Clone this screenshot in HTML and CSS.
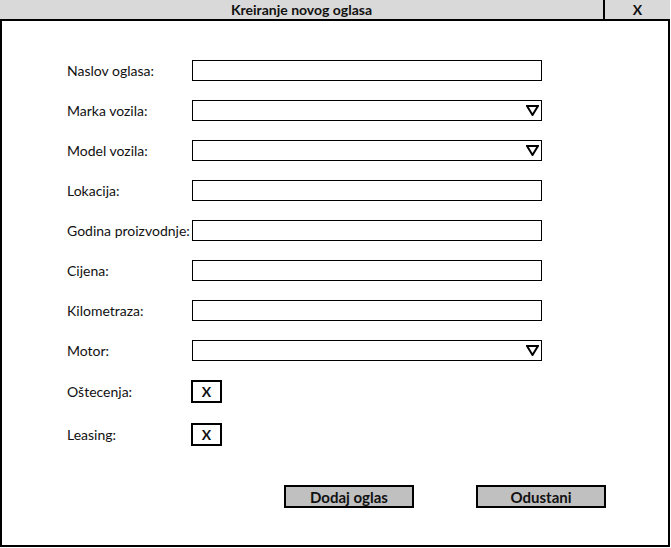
FILE: index.html
```html
<!DOCTYPE html>
<html>
<head>
<meta charset="utf-8">
<link rel="stylesheet" href="styles.css">
</head>
<body>
<div class="window">
  <div class="titlebar">
    <div class="title">Kreiranje novog oglasa</div>
    <div class="close">X</div>
  </div>
  <div class="form">
    <div class="row"><span class="label">Naslov oglasa:</span><span class="input"></span></div>
    <div class="row"><span class="label">Marka vozila:</span><span class="input select"><svg class="arrow" width="13" height="11" viewBox="0 0 13 11"><polygon points="1,1 12,1 6.5,10" fill="none" stroke="#000" stroke-width="2" stroke-linejoin="miter"/></svg></span></div>
    <div class="row"><span class="label">Model vozila:</span><span class="input select"><svg class="arrow" width="13" height="11" viewBox="0 0 13 11"><polygon points="1,1 12,1 6.5,10" fill="none" stroke="#000" stroke-width="2" stroke-linejoin="miter"/></svg></span></div>
    <div class="row"><span class="label">Lokacija:</span><span class="input"></span></div>
    <div class="row"><span class="label">Godina proizvodnje:</span><span class="input"></span></div>
    <div class="row"><span class="label">Cijena:</span><span class="input"></span></div>
    <div class="row"><span class="label">Kilometraza:</span><span class="input"></span></div>
    <div class="row"><span class="label">Motor:</span><span class="input select"><svg class="arrow" width="13" height="11" viewBox="0 0 13 11"><polygon points="1,1 12,1 6.5,10" fill="none" stroke="#000" stroke-width="2" stroke-linejoin="miter"/></svg></span></div>
    <div class="row check-row"><span class="label">Oštecenja:</span><span class="check">X</span></div>
    <div class="row check-row"><span class="label">Leasing:</span><span class="check">X</span></div>
    <div class="buttons">
      <span class="btn">Dodaj oglas</span>
      <span class="btn">Odustani</span>
    </div>
  </div>
</div>
</body>
</html>
```

FILE: styles.css
```css
html, body {
  margin: 0;
  padding: 0;
  background: #fff;
}
body {
  font-family: Lato, "Liberation Sans", Arial, sans-serif;
  font-size: 14px;
  color: #111;
}
.window {
  width: 670px;
  height: 547px;
  box-sizing: border-box;
  border-left: 2px solid #000;
  border-right: 2px solid #000;
  border-bottom: 2px solid #000;
  display: flex;
  flex-direction: column;
}
.titlebar {
  height: 21px;
  box-sizing: border-box;
  background: #d9d9d9;
  border-bottom: 2px solid #000;
  display: flex;
  margin-left: -2px;
  margin-right: -2px;
}
.title {
  width: 605px;
  box-sizing: border-box;
  border-right: 2px solid #000;
  text-align: center;
  font-weight: bold;
  font-size: 14px;
  line-height: 19px;
}
.close {
  flex: 1;
  text-align: center;
  font-weight: bold;
  font-size: 14px;
  line-height: 19px;
}
.form {
  padding: 39px 0 0 65px;
  display: flex;
  flex-direction: column;
}
.row {
  display: flex;
  align-items: center;
  height: 21px;
  margin-bottom: 19px;
}
.label {
  width: 125px;
  white-space: nowrap;
}
.input {
  width: 350px;
  height: 21px;
  box-sizing: border-box;
  border: 1.5px solid #000;
  display: flex;
  justify-content: flex-end;
  align-items: center;
  padding-right: 2px;
}
.arrow {
  display: block;
}
.check-row {
  height: 23px;
  margin-bottom: 20px;
}
.check-row .label {
  width: 124px;
}
.check {
  width: 31px;
  height: 23px;
  box-sizing: border-box;
  border: 2px solid #000;
  font-weight: bold;
  font-size: 14px;
  display: flex;
  align-items: center;
  justify-content: center;
}
.buttons {
  display: flex;
  gap: 62px;
  margin-left: 217px;
  margin-top: 19px;
}
.btn {
  width: 130px;
  height: 23px;
  box-sizing: border-box;
  border: 2px solid #000;
  background: #c0c0c0;
  font-weight: bold;
  font-size: 15px;
  display: flex;
  align-items: center;
  justify-content: center;
}
```
